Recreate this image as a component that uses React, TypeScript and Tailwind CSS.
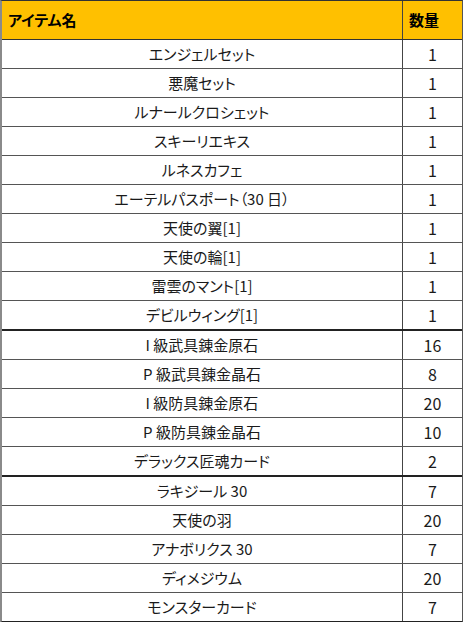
import React from 'react';

const groups: [string, string][][] = [
  [
    ['エンジェルセット', '1'],
    ['悪魔セット', '1'],
    ['ルナールクロシェット', '1'],
    ['スキーリエキス', '1'],
    ['ルネスカフェ', '1'],
    ['エーテルパスポート（30 日）', '1'],
    ['天使の翼[1]', '1'],
    ['天使の輪[1]', '1'],
    ['雷雲のマント[1]', '1'],
    ['デビルウィング[1]', '1'],
  ],
  [
    ['I 級武具錬金原石', '16'],
    ['P 級武具錬金晶石', '8'],
    ['I 級防具錬金原石', '20'],
    ['P 級防具錬金晶石', '10'],
    ['デラックス匠魂カード', '2'],
  ],
  [
    ['ラキジール 30', '7'],
    ['天使の羽', '20'],
    ['アナボリクス 30', '7'],
    ['ディメジウム', '20'],
    ['モンスターカード', '7'],
  ],
];

export default function App() {
  return (
    <div
      className="w-[464px] h-[622px] bg-white text-[#1a1a1a]"
      style={{ fontFamily: '"Noto Sans CJK JP", "Noto Sans", sans-serif', fontFeatureSettings: '"palt"' }}
    >
      <div className="w-[463px] border-l-2 border-r border-t border-b-2 border-l-[#8a8a8a] border-r-[#555] border-t-[#333] border-b-[#222]">
        {/* header */}
        <div className="flex h-[39px] bg-[#ffc000] border-b border-[#333] font-bold text-[15px] text-black">
          <div className="flex-1 flex items-center pl-[6px] border-r border-[#444]">アイテム名</div>
          <div className="w-[59px] flex items-center pl-[6px]">数量</div>
        </div>
        {groups.map((rows, gi) => (
          <div key={gi} className={gi < groups.length - 1 ? 'border-b-2 border-[#222]' : ''}>
            {rows.map(([name, qty], i) => (
              <div
                key={name}
                className={
                  'flex text-[15px] ' +
                  (i < rows.length - 1 ? 'h-[29px] border-b border-[#555]' : 'h-[28px]')
                }
              >
                <div className="flex-1 flex items-center justify-center border-r border-[#444]">{name}</div>
                <div className="w-[59px] flex items-center justify-center text-[16px]">{qty}</div>
              </div>
            ))}
          </div>
        ))}
      </div>
    </div>
  );
}
